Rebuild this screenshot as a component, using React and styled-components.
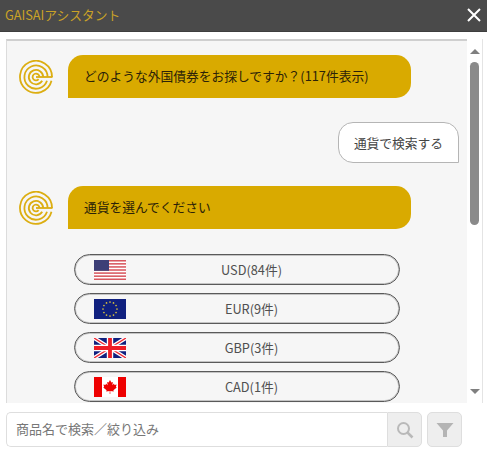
import React from "react";
import styled, { createGlobalStyle } from "styled-components";

const GlobalStyle = createGlobalStyle`
  html, body {
    margin: 0;
    padding: 0;
    background: #ffffff;
  }
  * {
    box-sizing: border-box;
  }
`;

const Window = styled.div`
  width: 487px;
  height: 455px;
  display: flex;
  flex-direction: column;
  overflow: hidden;
  background: #ffffff;
  font-family: "Noto Sans CJK JP", "Noto Sans", sans-serif;
`;

const Header = styled.div`
  height: 32px;
  flex: none;
  padding: 0 6px 2px 5px;
  display: flex;
  align-items: center;
  justify-content: space-between;
  background: #4a4a4a;
  border-bottom: 1px solid #3e3e3e;
`;

const HeaderTitle = styled.div`
  font-size: 12.75px;
  color: #c9a227;
`;

const CloseButton = styled.button`
  width: 14px;
  height: 14px;
  padding: 0;
  border: 0;
  background: none;
  display: block;
`;

const Panel = styled.div`
  flex: none;
  height: 364px;
  margin: 7px 4px 0 6px;
  display: flex;
  overflow: hidden;
  border-right: 1px solid #e4e4e4;
`;

const Log = styled.div`
  width: 461px;
  flex: none;
  padding: 14px 8px 0 12px;
  display: flex;
  flex-direction: column;
  overflow: hidden;
  background: #f6f6f6;
  border-top: 2px solid #cfcfcf;
  border-left: 1px solid #dcdcdc;
`;

const BotRow = styled.div`
  flex: none;
  display: flex;
  align-items: center;
  gap: 15px;
  margin-top: ${props => props.$top || 0}px;
`;

const BotBubble = styled.div`
  width: 343px;
  height: 43px;
  padding: 0 16px 2px;
  display: flex;
  align-items: center;
  font-size: 12.75px;
  color: #2b2208;
  background: #d9aa00;
  border-radius: 15px 15px 15px 0;
`;

const UserRow = styled.div`
  flex: none;
  display: flex;
  justify-content: flex-end;
  margin-top: 24px;
`;

const UserBubble = styled.div`
  width: 121px;
  height: 41px;
  display: flex;
  align-items: center;
  justify-content: center;
  font-size: 12.75px;
  color: #444444;
  background: #ffffff;
  border: 1px solid #b5b5b5;
  border-radius: 15px 15px 0 15px;
`;

const ChoiceList = styled.div`
  flex: none;
  margin: 25px 0 0 55px;
  width: 326px;
  display: flex;
  flex-direction: column;
  gap: 8px;
`;

const Choice = styled.button`
  position: relative;
  width: 100%;
  height: 31px;
  flex: none;
  padding: 0;
  display: flex;
  align-items: center;
  background: #f6f6f6;
  border: 1px solid #5a5a5a;
  border-radius: 16px;
  box-shadow: inset 0 0 0 1px #c4c4c4;
  font-family: inherit;
  font-size: 12.75px;
  color: #505050;
`;

const FlagSlot = styled.span`
  width: 32px;
  height: 20px;
  margin-left: 19px;
  flex: none;
  display: block;
  line-height: 0;
`;

const ChoiceLabel = styled.span`
  flex: 1;
  padding-right: 22px;
  text-align: center;
`;

const Scrollbar = styled.div`
  flex: 1;
  display: flex;
  flex-direction: column;
  align-items: center;
  padding: 10px 0 9px;
  background: #ffffff;
`;

const ScrollArrow = styled.div`
  width: 0;
  height: 0;
  flex: none;
  border-left: 5px solid transparent;
  border-right: 5px solid transparent;
  ${props =>
    props.$down
      ? "border-top: 5px solid #7f7f7f; margin-top: auto;"
      : "border-bottom: 5px solid #7f7f7f;"}
`;

const ScrollThumb = styled.div`
  width: 9px;
  height: 163px;
  margin-top: 8px;
  flex: none;
  background: #8a8a8a;
  border-radius: 5px;
`;

const SearchBar = styled.div`
  flex: none;
  margin: 9px 0 0 6px;
  display: flex;
  align-items: stretch;
  height: 35px;
`;

const SearchInput = styled.input`
  width: 381px;
  height: 100%;
  padding: 0 9px 2px;
  border: 1px solid #dedede;
  border-right: 0;
  border-radius: 5px 0 0 5px;
  outline: none;
  background: #ffffff;
  font-family: inherit;
  font-size: 13px;
  color: #444444;

  &::placeholder {
    color: #777777;
    opacity: 1;
  }
`;

const IconButton = styled.button`
  width: 35px;
  padding: 0;
  display: flex;
  align-items: center;
  justify-content: center;
  background: #eeeeee;
  border: 1px solid #dedede;
  border-radius: ${props => (props.$joined ? "0 5px 5px 0" : "5px")};
  margin-left: ${props => (props.$joined ? 0 : 5)}px;
`;

const LogoMark = () => (
  <svg width="34" height="34" viewBox="0 0 34 34" fill="none" stroke="#dcae12" strokeWidth="1.8">
    <path d="M33 17 A16 16 0 1 0 32.5 20.8" />
    <path d="M28.6 17 A11.6 11.6 0 1 0 28 20.8" />
    <path d="M24.2 17 A7.2 7.2 0 1 0 23.2 20.8" />
    <path d="M20.4 17 A3.4 3.4 0 1 0 19.6 19.2" />
    <path d="M17 17 H33.5" />
  </svg>
);

const UsFlag = () => (
  <svg width="32" height="20" viewBox="0 0 32 20">
    <rect width="32" height="20" fill="#fff" />
    {[0, 1, 2, 3, 4, 5, 6].map(i => (
      <rect key={i} y={i * 3.08} width="32" height="1.54" fill="#d8575f" />
    ))}
    <rect width="15" height="10.8" fill="#3c3f77" />
  </svg>
);

const stars = Array.from({ length: 12 }, (_, i) => {
  const a = (i * Math.PI) / 6;
  return [16 + Math.cos(a) * 7, 10 + Math.sin(a) * 7];
});

const EuFlag = () => (
  <svg width="32" height="20" viewBox="0 0 32 20">
    <rect width="32" height="20" fill="#10207f" />
    {stars.map(([x, y], i) => (
      <circle key={i} cx={x} cy={y} r="0.85" fill="#d9c23c" />
    ))}
  </svg>
);

const UkFlag = () => (
  <svg width="32" height="20" viewBox="0 0 32 20">
    <rect width="32" height="20" fill="#10207f" />
    <path d="M0 0 L32 20 M32 0 L0 20" stroke="#fff" strokeWidth="4" />
    <path d="M0 0 L32 20 M32 0 L0 20" stroke="#ee2a35" strokeWidth="1.4" />
    <path d="M16 0 V20 M0 10 H32" stroke="#fff" strokeWidth="6.4" />
    <path d="M16 0 V20 M0 10 H32" stroke="#ee1c25" strokeWidth="3.8" />
  </svg>
);

const CaFlag = () => (
  <svg width="32" height="20" viewBox="0 0 32 20">
    <rect width="32" height="20" fill="#fff" />
    <rect width="8" height="20" fill="#ee0000" />
    <rect x="24" width="8" height="20" fill="#ee0000" />
    <path
      d="M16 3 L17.4 5.6 L18.9 4.9 L18.3 8.3 L20 6.6 L20.5 7.9 L22.6 7.5 L21.9 9.9 L22.8 10.4 L19.4 13.2 L19.8 14.5 L16.3 14.1 L16.3 17 H15.7 L15.7 14.1 L12.2 14.5 L12.6 13.2 L9.2 10.4 L10.1 9.9 L9.4 7.5 L11.5 7.9 L12 6.6 L13.7 8.3 L13.1 4.9 L14.6 5.6 Z"
      fill="#ee0000"
    />
  </svg>
);

const choices = [
  { label: "USD(84件)", Flag: UsFlag },
  { label: "EUR(9件)", Flag: EuFlag },
  { label: "GBP(3件)", Flag: UkFlag },
  { label: "CAD(1件)", Flag: CaFlag },
];

const App = () => (
  <Window>
    <GlobalStyle />
    <Header>
      <HeaderTitle>GAISAIアシスタント</HeaderTitle>
      <CloseButton aria-label="閉じる">
        <svg width="14" height="14" viewBox="0 0 14 14">
          <path d="M1 1 L13 13 M13 1 L1 13" stroke="#ffffff" strokeWidth="2" />
        </svg>
      </CloseButton>
    </Header>
    <Panel>
      <Log>
        <BotRow>
          <LogoMark />
          <BotBubble>どのような外国債券をお探しですか？(117件表示)</BotBubble>
        </BotRow>
        <UserRow>
          <UserBubble>通貨で検索する</UserBubble>
        </UserRow>
        <BotRow $top={23}>
          <LogoMark />
          <BotBubble>通貨を選んでください</BotBubble>
        </BotRow>
        <ChoiceList>
          {choices.map(({ label, Flag }) => (
            <Choice key={label}>
              <FlagSlot>
                <Flag />
              </FlagSlot>
              <ChoiceLabel>{label}</ChoiceLabel>
            </Choice>
          ))}
        </ChoiceList>
      </Log>
      <Scrollbar>
        <ScrollArrow />
        <ScrollThumb />
        <ScrollArrow $down />
      </Scrollbar>
    </Panel>
    <SearchBar>
      <SearchInput placeholder="商品名で検索／絞り込み" />
      <IconButton $joined aria-label="検索">
        <svg width="18" height="18" viewBox="0 0 18 18" fill="none" stroke="#b9b9b9">
          <circle cx="7.5" cy="7.5" r="5.5" strokeWidth="2" />
          <path d="M11.6 11.6 L16.5 16.5" strokeWidth="2.6" />
        </svg>
      </IconButton>
      <IconButton aria-label="絞り込み">
        <svg width="18" height="16" viewBox="0 0 18 16">
          <path d="M0.5 1 H17.5 L11 8.5 V15 L7 15 V8.5 Z" fill="#b4b4b4" />
        </svg>
      </IconButton>
    </SearchBar>
  </Window>
);

export default App;
